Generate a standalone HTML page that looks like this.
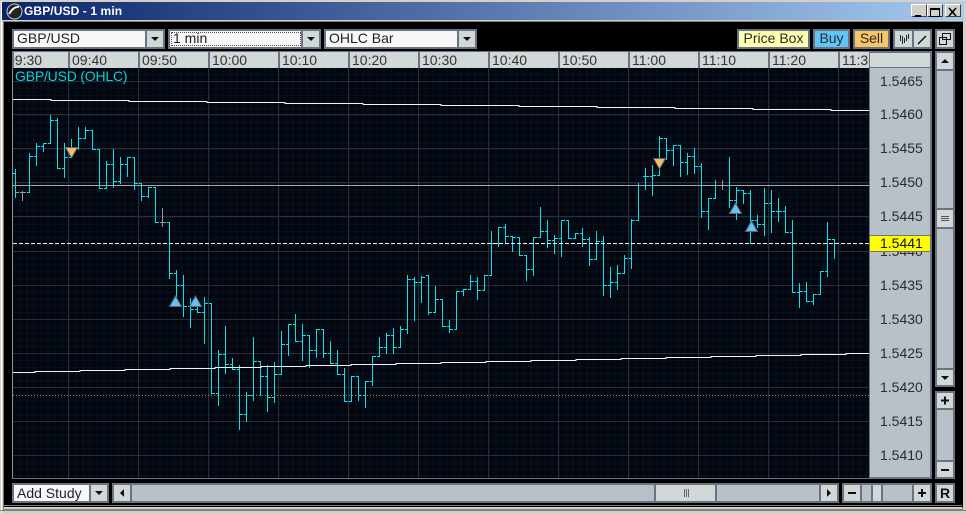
<!DOCTYPE html>
<html><head><meta charset="utf-8"><title>GBP/USD - 1 min</title>
<style>
html,body{margin:0;padding:0;background:#000}
body{width:966px;height:514px;position:relative;overflow:hidden;font-family:"Liberation Sans",sans-serif;font-size:14px;color:#2a2a2a}
div{position:absolute;box-sizing:border-box}
.b{border:2px solid #6b7284;background:#d0d9d8}
.t{height:17px;line-height:17px;white-space:nowrap}
.w{background:#f8f8f8;border:2px solid #6b7284;border-right:0;line-height:15px;padding-left:3px;color:#222;font-size:14px;white-space:nowrap}
.tb{line-height:15px;text-align:center;border:2px solid #6b7284}
.p{left:880px;width:44px;height:17px;line-height:17px;color:#2a2a2a}
.wb{background:#d4d0c8;border:1px solid;border-color:#fff #404040 #404040 #fff;width:16px;height:13px;top:4px}
</style></head><body>
<!-- frame -->
<div style="left:0;top:0;width:966px;height:514px;background:#d4d0c8"></div>
<div style="left:1px;top:1px;width:1px;height:512px;background:#fff"></div>
<div style="left:3px;top:21px;width:960px;height:489px;border:1px solid #808080"></div>
<div style="left:4px;top:22px;width:959px;height:485px;background:#000"></div>
<div style="left:4px;top:505px;width:958px;height:1px;background:#808080"></div>
<div style="left:0;top:510px;width:966px;height:1px;background:#808080"></div>
<!-- title -->
<div style="left:2px;top:2px;width:962px;height:18px;background:linear-gradient(90deg,#0a246a,#a6caf0)"></div>
<svg style="position:absolute;left:6px;top:3px" width="17" height="17"><circle cx="8.5" cy="8.5" r="7.5" fill="#222" stroke="#ccc"/><path d="M3 11Q8 3 13 4" stroke="#eee" stroke-width="2" fill="none"/></svg>
<div class="t" style="left:24px;top:3px;color:#fff;font-weight:bold;font-size:12px;letter-spacing:.1px">GBP/USD - 1 min</div>
<div class="wb" style="left:911px"><svg width="14" height="11"><path d="M3 9h6" stroke="#000" stroke-width="2"/></svg></div>
<div class="wb" style="left:927px"><svg width="14" height="11"><path d="M2.5 1.5h9v8h-9zM2 2.5h10" stroke="#000" fill="none"/></svg></div>
<div class="wb" style="left:945px"><svg width="14" height="11"><path d="M3 1l7 8M10 1l-7 8" stroke="#000" stroke-width="1.6" fill="none"/></svg></div>
<!-- toolbar combos -->
<div class="w" style="left:12px;top:29px;width:134px;height:20px">GBP/USD</div>
<div class="b" style="left:145px;top:29px;width:20px;height:20px"><svg width="16" height="16"><path d="M4 6h8l-4 4z" fill="#111"/></svg></div>
<div class="w" style="left:168px;top:29px;width:134px;height:20px">1 min<div style="left:1px;top:1px;right:1px;bottom:1px;border:1px dotted #555"></div></div>
<div class="b" style="left:301px;top:29px;width:20px;height:20px"><svg width="16" height="16"><path d="M4 6h8l-4 4z" fill="#111"/></svg></div>
<div class="w" style="left:324px;top:29px;width:134px;height:20px">OHLC Bar</div>
<div class="b" style="left:457px;top:29px;width:20px;height:20px"><svg width="16" height="16"><path d="M4 6h8l-4 4z" fill="#111"/></svg></div>
<!-- right buttons -->
<div class="tb" style="left:737px;top:29px;width:73px;height:20px;background:#ffffb0">Price Box</div>
<div class="tb" style="left:813px;top:29px;width:37px;height:20px;background:#60c4f8">Buy</div>
<div class="tb" style="left:853px;top:29px;width:37px;height:20px;background:#f8c464">Sell</div>
<div class="b" style="left:893px;top:29px;width:21px;height:20px"><svg width="17" height="16"><path d="M5.5 4v6M7.5 5v8M9.5 7v5M11.5 4v6M13.5 3v5" stroke="#222" fill="none"/></svg></div>
<div class="b" style="left:912px;top:29px;width:20px;height:20px"><svg width="16" height="16"><path d="M4 13L12 5" stroke="#111" stroke-width="1.5" fill="none"/></svg></div>
<div class="b" style="left:935px;top:29px;width:20px;height:20px"><svg width="16" height="16"><path d="M5.5 2.5h8v6h-8zM2.5 6.500h7v7h-7z" stroke="#111" fill="#d0d9d8"/></svg></div>
<!-- time axis -->
<div style="left:12px;top:51px;width:858px;height:17px;background:#d0d9d8;border-top:1px solid #6b7284;overflow:hidden">
<div class="t" style="left:-5px;top:0;color:#333;width:34px">09:30</div>
<div class="t" style="left:60px;top:0;color:#333">09:40</div>
<div class="t" style="left:130px;top:0;color:#333">09:50</div>
<div class="t" style="left:200px;top:0;color:#333">10:00</div>
<div class="t" style="left:270px;top:0;color:#333">10:10</div>
<div class="t" style="left:340px;top:0;color:#333">10:20</div>
<div class="t" style="left:410px;top:0;color:#333">10:30</div>
<div class="t" style="left:480px;top:0;color:#333">10:40</div>
<div class="t" style="left:550px;top:0;color:#333">10:50</div>
<div class="t" style="left:620px;top:0;color:#333">11:00</div>
<div class="t" style="left:690px;top:0;color:#333">11:10</div>
<div class="t" style="left:760px;top:0;color:#333">11:20</div>
<div class="t" style="left:830px;top:0;color:#333">11:30</div>
<div style="left:0;top:0;width:2px;height:17px;background:#6b7284"></div>
<div style="left:56px;top:0;width:1px;height:17px;background:#6b7284;box-shadow:1px 0 #6b7284,70px 0 #6b7284,71px 0 #6b7284,140px 0 #6b7284,141px 0 #6b7284,210px 0 #6b7284,211px 0 #6b7284,280px 0 #6b7284,281px 0 #6b7284,350px 0 #6b7284,351px 0 #6b7284,420px 0 #6b7284,421px 0 #6b7284,490px 0 #6b7284,491px 0 #6b7284,560px 0 #6b7284,561px 0 #6b7284,630px 0 #6b7284,631px 0 #6b7284,700px 0 #6b7284,701px 0 #6b7284,770px 0 #6b7284,771px 0 #6b7284"></div>
</div>
<!-- chart -->
<div style="left:12px;top:68px;width:858px;height:411px;background-color:#02060e;border-left:1px solid #8a8f98;border-bottom:1px solid #6b7284"></div>
<svg style="position:absolute;left:0;top:0" width="870" height="478" shape-rendering="crispEdges">
<defs>
<pattern id="gv" width="7" height="4" patternUnits="userSpaceOnUse" x="5.500"><path d="M.5 0v4" stroke="#091220" fill="none"/></pattern>
<pattern id="gh" width="4" height="6.8" patternUnits="userSpaceOnUse" y="81"><path d="M0 .5h4" stroke="#091220" fill="none"/></pattern>
<clipPath id="cl"><rect x="13" y="68" width="857" height="410"/></clipPath>
</defs>
<g clip-path="url(#cl)">
<rect x="13" y="68" width="857" height="410" fill="url(#gv)"/>
<rect x="13" y="68" width="857" height="410" fill="url(#gh)"/>
<path fill="none" stroke="#2a2e3a" d="M13 81.500H870M13 114.500H870M13 148.500H870M13 182.500H870M13 216.500H870M13 251.500H870M13 285.500H870M13 319.500H870M13 353.500H870M13 387.500H870M13 421.500H870M13 455.500H870M68.500 68V478M138.500 68V478M208.500 68V478M278.500 68V478M348.500 68V478M418.500 68V478M488.500 68V478M558.500 68V478M628.500 68V478M698.500 68V478M768.500 68V478M838.500 68V478"/>
<path fill="none" stroke="#00e4ee" d="M15.5 169V198M13 173.5h2M16 192.5h3M29.5 153V193M27 192.5h2M30 156.5h3M36.5 143V166M34 156.5h2M37 146.5h3M43.5 143V152M41 146.5h2M44 143.5h3M50.5 115V144M48 143.5h2M51 120.5h3M57.5 118V169M55 120.5h2M58 168.5h3M64.5 143V178M62 168.5h2M65 157.5h3M71.5 139V158M69 157.5h2M72 148.5h3M78.5 127V150M76 148.5h2M79 138.5h3M85.5 127V139M83 138.5h2M86 130.5h3M92.5 130V150M90 130.5h2M93 149.5h3M99.5 149V189M97 149.5h2M100 188.5h3M106.5 161V189M104 188.5h2M107 164.5h3M113.5 149V188M111 164.5h2M114 181.5h3M120.5 157V184M118 181.5h2M121 164.5h3M127.5 157V177M125 164.5h2M128 157.5h3M134.5 157V190M132 157.5h2M135 183.5h3M141.5 183V201M139 183.5h2M142 196.5h3M148.5 187V198M146 196.5h2M149 187.5h3M155.5 187V223M153 187.5h2M156 222.5h3M169.5 222V279M167 222.5h2M170 273.5h3M176.5 270V301M174 273.5h2M177 285.5h3M183.5 275V317M181 285.5h2M184 306.5h3M190.5 298V328M188 306.5h2M191 309.5h3M197.5 306V313M195 309.5h2M198 312.5h3M204.5 297V344M202 312.5h2M205 303.5h3M211.5 303V394M209 303.5h2M212 393.5h3M218.5 350V406M216 393.5h2M219 354.5h3M225.5 326V374M223 354.5h2M226 364.5h3M232.5 358V370M230 364.5h2M233 369.5h3M239.5 365V430M237 369.5h2M240 414.5h3M246.5 392V422M244 414.5h2M247 395.5h3M253.5 337V401M251 395.5h2M254 361.5h3M260.5 361V396M258 361.5h2M261 376.5h3M267.5 365V412M265 376.5h2M268 397.5h3M274.5 362V403M272 397.5h2M275 374.5h3M281.5 331V375M279 374.5h2M282 344.5h3M288.5 324V356M286 344.5h2M289 324.5h3M295.5 314V342M293 324.5h2M296 341.5h3M302.5 324V361M300 341.5h2M303 335.5h3M309.5 335V368M307 335.5h2M310 350.5h3M316.5 329V358M314 350.5h2M317 329.5h3M323.5 329V358M321 329.5h2M324 353.5h3M330.5 341V364M328 353.5h2M331 363.5h3M337.5 350V375M335 363.5h2M338 374.5h3M344.5 368V402M342 374.5h2M345 401.5h3M351.5 376V402M349 401.5h2M352 376.5h3M358.5 376V401M356 376.5h2M359 395.5h3M365.5 381V408M363 395.5h2M366 381.5h3M372.5 356V386M370 381.5h2M373 356.5h3M379.5 337V357M377 356.5h2M380 347.5h3M386.5 333V354M384 347.5h2M387 335.5h3M393.5 328V354M391 335.5h2M394 347.5h3M400.5 326V348M398 347.5h2M401 329.5h3M407.5 275V334M405 329.5h2M408 279.5h3M414.5 277V321M412 279.5h2M415 282.5h3M421.5 276V303M419 282.5h2M422 277.5h3M428.5 275V315M426 275.5h2M429 312.5h3M435.5 286V313M433 312.5h2M436 299.5h3M442.5 299V327M440 299.5h2M443 326.5h3M449.5 320V333M447 326.5h2M450 329.5h3M456.5 291V330M454 329.5h2M457 291.5h3M463.5 289V296M461 291.5h2M464 289.5h3M470.5 275V290M468 289.5h2M471 281.5h3M477.5 277V300M475 281.5h2M478 290.5h3M484.5 275V291M482 290.5h2M485 275.5h3M491.5 231V276M489 275.5h2M492 243.5h3M498.5 227V247M496 243.5h2M499 227.5h3M505.5 224V244M503 227.5h2M506 236.5h3M512.5 236V252M510 236.5h2M513 237.5h3M519.5 237V256M517 237.5h2M520 255.5h3M526.5 255V281M524 255.5h2M527 269.5h3M533.5 237V276M531 269.5h2M534 237.5h3M540.5 207V238M538 237.5h2M541 231.5h3M547.5 220V248M545 231.5h2M548 240.5h3M554.5 235V254M552 240.5h2M555 238.5h3M561.5 220V257M559 238.5h2M562 220.5h3M568.5 220V239M566 220.5h2M569 238.5h3M575.5 233V239M573 238.5h2M576 233.5h3M582.5 228V247M580 233.5h2M583 239.5h3M589.5 237V266M587 239.5h2M590 259.5h3M596.5 231V260M594 259.5h2M597 241.5h3M603.5 236V296M601 241.5h2M604 285.5h3M610.5 267V298M608 285.5h2M611 282.5h3M617.5 265V290M615 282.5h2M618 273.5h3M624.5 255V274M622 273.5h2M625 258.5h3M631.5 219V269M629 258.5h2M632 220.5h3M638.5 183V221M636 220.5h2M639 185.5h3M645.5 168V190M643 176.5h2M646 176.5h3M652.5 165V196M650 176.5h2M653 175.5h3M659.5 136V176M657 175.5h2M660 138.5h3M666.5 138V160M664 138.5h2M667 150.5h3M673.5 145V166M671 150.5h2M674 145.5h3M680.5 145V177M678 145.5h2M681 162.5h3M687.5 153V175M685 162.5h2M688 156.5h3M694.5 148V174M692 156.5h2M695 166.5h3M701.5 163V218M699 166.5h2M702 211.5h3M708.5 198V230M706 211.5h2M709 198.5h3M715.5 180V199M713 198.5h2M716 185.5h3M729.5 157V208M727 185.5h2M730 200.5h3M736.5 187V220M734 200.5h2M737 190.5h3M743.5 190V204M741 190.5h2M744 193.5h3M750.5 190V244M748 193.5h2M751 220.5h3M757.5 215V228M755 220.5h2M758 224.5h3M764.5 188V236M762 224.5h2M765 203.5h3M771.5 190V233M769 203.5h2M772 211.5h3M778.5 198V222M776 211.5h2M779 211.5h3M785.5 206V233M783 211.5h2M786 232.5h3M792.5 220V293M790 232.5h2M793 292.5h3M799.5 283V308M797 292.5h2M800 291.5h3M806.5 282V302M804 291.5h2M807 301.5h3M813.5 294V305M811 301.5h2M814 294.5h3M820.5 271V295M818 294.5h2M821 271.5h3M827.5 222V277M825 271.5h2M828 239.5h3M834.5 239V259M832 239.5h2"/>
<path fill="none" stroke="#9a9a9a" d="M22.500 191V201M20 192.5h2M23 192.5h3M162.500 208V227M160 222.5h2M163 222.5h3M722.500 180V190M720 185.5h2M723 185.5h3"/>
<path d="M13 99.500H51V100.500H129V101.500H207V102.500H285V103.500H363V104.500H441V105.500H519V106.500H597V107.500H675V108.500H753V109.500H831V110.500H870" stroke="#f4f4f4" fill="none"/>
<path d="M13 372.500H35V371.500H80V370.500H125V369.500H170V368.500H215V367.500H261V366.500H306V365.500H351V364.500H396V363.500H441V362.500H486V361.500H531V360.500H576V359.500H621V358.500H666V357.500H711V356.500H756V355.500H801V354.500H846V353.500H870" stroke="#f4f4f4" fill="none"/>
<path d="M13 185.500H870" stroke="#a8a8a8" fill="none"/>
<path d="M13 243.500H870" stroke="#f0f0f0" stroke-dasharray="4 2" fill="none"/>
<path d="M13 395.500H870" stroke="#b08a30" stroke-dasharray="1 2" fill="none"/>
<g shape-rendering="auto" stroke="#5c6470" stroke-width="1">
<path d="M65.500 147.500h12l-6 10.500z" fill="#f8bc60"/>
<path d="M653.500 158.500h12l-6 10.500z" fill="#f8bc60"/>
<path d="M169.500 306.500h12l-6-10.500z" fill="#62c4f4"/>
<path d="M189.500 306.500h12l-6-10.500z" fill="#62c4f4"/>
<path d="M729.500 213.500h12l-6-10.500z" fill="#62c4f4"/>
<path d="M745.500 231.500h12l-6-10.500z" fill="#62c4f4"/>
</g>
</g>
</svg>
<div class="t" style="left:15px;top:68px;color:#00d4dc;font-size:14px;letter-spacing:-.2px">GBP/USD (OHLC)</div>
<!-- price axis -->
<div style="left:869px;top:51px;width:63px;height:428px;background:#b8c0c8;border:2px solid #6b7284;border-left-width:1px"></div>
<div style="left:870px;top:53px;width:60px;height:15px;background:#d0d9d8;border-bottom:1px solid #6b7284"></div>
<div class="p t" style="top:73px">1.5465</div>
<div class="p t" style="top:106px">1.5460</div>
<div class="p t" style="top:140px">1.5455</div>
<div class="p t" style="top:174px">1.5450</div>
<div class="p t" style="top:208px">1.5445</div>
<div class="p t" style="top:243px">1.5440</div>
<div class="p t" style="top:277px">1.5435</div>
<div class="p t" style="top:311px">1.5430</div>
<div class="p t" style="top:345px">1.5425</div>
<div class="p t" style="top:379px">1.5420</div>
<div class="p t" style="top:413px">1.5415</div>
<div class="p t" style="top:447px">1.5410</div>
<div style="left:870px;top:235px;width:62px;height:17px;background:#ffff00;border-top:1px solid #6b7284;border-bottom:1px solid #6b7284;border-right:2px solid #6b7284"></div>
<div class="p t" style="top:235px;color:#111">1.5441</div>
<!-- right scrollbar -->
<div style="left:935px;top:51px;width:20px;height:336px;background:#b8c0c8;border:2px solid #6b7284"></div>
<div class="b" style="left:935px;top:51px;width:20px;height:20px"><svg width="16" height="16"><path d="M4 10h8l-4-4z" fill="#111"/></svg></div>
<div class="b" style="left:935px;top:208px;width:20px;height:21px"><svg width="16" height="17"><path d="M4 6.500h8M4 8.500h8M4 10.500h8" stroke="#555"/></svg></div>
<div class="b" style="left:935px;top:368px;width:20px;height:19px"><svg width="16" height="15"><path d="M4 6h8l-4 4z" fill="#111"/></svg></div>
<div style="left:935px;top:391px;width:20px;height:88px;background:#b8c0c8;border:2px solid #6b7284"></div>
<div class="b" style="left:935px;top:391px;width:20px;height:19px"><svg width="16" height="15"><path d="M4 7.500h8M8 3.500v8" stroke="#111" stroke-width="2"/></svg></div>
<div class="b" style="left:935px;top:460px;width:20px;height:19px"><svg width="16" height="15"><path d="M4 8h8" stroke="#111" stroke-width="2"/></svg></div>
<!-- bottom -->
<div class="w" style="left:12px;top:483px;width:78px;height:20px;line-height:16px">Add Study</div>
<div class="b" style="left:89px;top:483px;width:20px;height:20px"><svg width="16" height="16"><path d="M4 6h8l-4 4z" fill="#111"/></svg></div>
<div style="left:112px;top:483px;width:727px;height:20px;background:#b8c0c8;border:2px solid #6b7284"></div>
<div class="b" style="left:112px;top:483px;width:20px;height:20px"><svg width="16" height="16"><path d="M6 8l4-4v8z" fill="#111"/></svg></div>
<div class="b" style="left:654px;top:483px;width:63px;height:20px"><svg width="59" height="16"><path d="M28.500 4v8M30.500 4v8M32.500 4v8" stroke="#666"/></svg></div>
<div class="b" style="left:819px;top:483px;width:20px;height:20px"><svg width="16" height="16"><path d="M10 8l-4-4v8z" fill="#111"/></svg></div>
<div style="left:842px;top:483px;width:90px;height:20px;background:#b8c0c8;border:2px solid #6b7284"></div>
<div class="b" style="left:842px;top:483px;width:20px;height:20px"><svg width="16" height="16"><path d="M4 8h8" stroke="#111" stroke-width="2"/></svg></div>
<div class="b" style="left:871px;top:483px;width:12px;height:20px"></div>
<div class="b" style="left:912px;top:483px;width:20px;height:20px"><svg width="16" height="16"><path d="M4 8h8M8 4v8" stroke="#111" stroke-width="2"/></svg></div>
<div class="b" style="left:935px;top:483px;width:20px;height:20px;font-weight:bold;font-size:14px;line-height:16px;text-align:center;color:#111">R</div>
</body></html>
